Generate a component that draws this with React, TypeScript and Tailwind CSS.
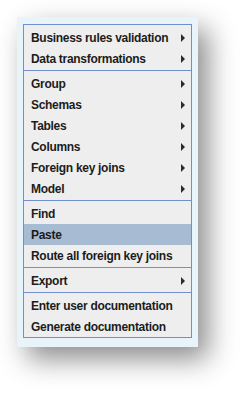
type MenuEntry = { label: string; sub?: boolean; active?: boolean } | 'sep';

const entries: MenuEntry[] = [
  { label: 'Business rules validation', sub: true },
  { label: 'Data transformations', sub: true },
  'sep',
  { label: 'Group', sub: true },
  { label: 'Schemas', sub: true },
  { label: 'Tables', sub: true },
  { label: 'Columns', sub: true },
  { label: 'Foreign key joins', sub: true },
  { label: 'Model', sub: true },
  'sep',
  { label: 'Find' },
  { label: 'Paste', active: true },
  { label: 'Route all foreign key joins' },
  'sep',
  { label: 'Export', sub: true },
  'sep',
  { label: 'Enter user documentation' },
  { label: 'Generate documentation' },
];

const Arrow = () => (
  <svg width="4" height="8" viewBox="0 0 4 8" className="shrink-0">
    <path d="M0 0 L4 4 L0 8 Z" fill="#2b2b2b" />
  </svg>
);

export default function App() {
  return (
    <div className="min-h-[395px] bg-white pl-[17px] pt-[17px]">
      <div className="w-[181px] bg-[#e8f3fa] pb-[9px] pl-[6px] pr-[6px] pt-[7px] shadow-[10px_12px_26px_rgba(0,0,0,0.45)]">
        <div
          className="border border-[#6f8fcf] bg-[#eeeeee] pt-[2px] text-[12px] font-bold tracking-[-0.3px] text-[#1c1c1c]"
          style={{ fontFamily: '"Liberation Sans", Arial, sans-serif' }}
        >
          {entries.map((e, i) =>
            e === 'sep' ? (
              <div key={i} className="pb-[2px] pt-[1px]">
                <div className="h-px bg-[#6f8fcf]" />
              </div>
            ) : (
              <div
                key={i}
                className={`flex h-[21px] items-center justify-between pl-[7px] pr-[6px] ${e.active ? 'bg-[#a7bbd2]' : ''}`}
              >
                <span className="whitespace-nowrap">{e.label}</span>
                {e.sub && <Arrow />}
              </div>
            ),
          )}
        </div>
      </div>
    </div>
  );
}
